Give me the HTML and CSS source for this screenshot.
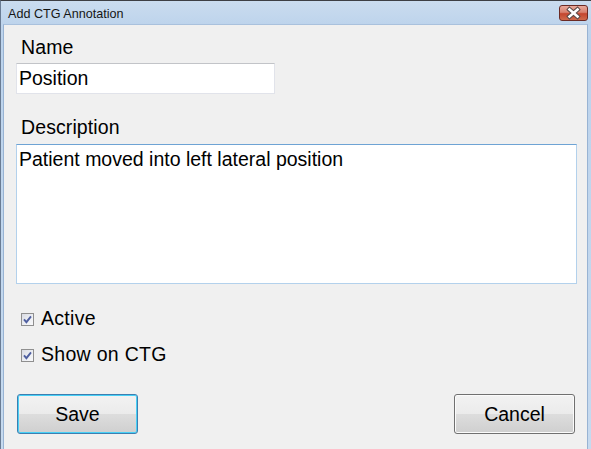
FILE: index.html
```html
<!DOCTYPE html>
<html>
<head>
<meta charset="utf-8">
<title>Add CTG Annotation</title>
<link rel="stylesheet" href="styles.css">
</head>
<body>
<div class="window">
  <div class="titlebar">
    <span class="title">Add CTG Annotation</span>
    <div class="close-btn">
      <svg width="29" height="16" viewBox="0 0 29 16">
        <path d="M10.5 4.5 L18.5 11.5 M18.5 4.5 L10.5 11.5" stroke="#5a4a48" stroke-width="4.6" stroke-linecap="square" fill="none"/>
        <path d="M10.5 4.5 L18.5 11.5 M18.5 4.5 L10.5 11.5" stroke="#ffffff" stroke-width="2.6" stroke-linecap="square" fill="none"/>
      </svg>
    </div>
  </div>
  <div class="client">
    <label class="field-label">Name</label>
    <input class="textbox" type="text" value="Position">
    <label class="field-label desc-label">Description</label>
    <textarea class="textarea">Patient moved into left lateral position</textarea>
    <div class="check-row first">
      <span class="checkbox">
        <svg width="11" height="11" viewBox="0 0 11 11"><path d="M2 5.4 L4.4 8.2 L9 2.4" stroke="#4f5fa0" stroke-width="1.9" fill="none"/></svg>
      </span>
      <span class="check-text">Active</span>
    </div>
    <div class="check-row">
      <span class="checkbox">
        <svg width="11" height="11" viewBox="0 0 11 11"><path d="M2 5.4 L4.4 8.2 L9 2.4" stroke="#4f5fa0" stroke-width="1.9" fill="none"/></svg>
      </span>
      <span class="check-text">Show on CTG</span>
    </div>
    <div class="buttons">
      <button class="btn btn-default">Save</button>
      <button class="btn">Cancel</button>
    </div>
  </div>
</div>
</body>
</html>
```
FILE: styles.css
```css
html, body {
  margin: 0;
  padding: 0;
  background: #f0f0f0;
}
.window {
  width: 591px;
  height: 449px;
  box-sizing: border-box;
  border-top: 1px solid #3d3f44;
  border-left: 1px solid #6a7c94;
  background: linear-gradient(to bottom, #c3d7ee 0px, #bcd3ec 40px, #c6daef 100%);
  display: flex;
  flex-direction: column;
  overflow: hidden;
  font-family: "Liberation Sans", Arial, sans-serif;
  color: #000;
}
.titlebar {
  height: 23px;
  flex: none;
  display: flex;
  align-items: flex-start;
  justify-content: space-between;
  background: linear-gradient(to bottom, #cadcef 0%, #bed4ec 100%);
}
.title {
  font-size: 12.6px;
  line-height: 14px;
  margin-top: 6px;
  margin-left: 7px;
  color: #151515;
}
.close-btn {
  width: 29px;
  height: 16px;
  margin-top: 4px;
  margin-right: 3px;
  box-sizing: border-box;
  border: 1px solid #6b2a24;
  border-radius: 3px;
  background: linear-gradient(to bottom, #e9a99b 0%, #d8816f 45%, #c4462f 55%, #cf6a4c 100%);
  display: flex;
  align-items: center;
  justify-content: center;
  overflow: hidden;
}
.close-btn svg {
  flex: none;
  margin-left: -1px;
  margin-top: -1px;
}
.client {
  flex: 1;
  margin-left: 2px;
  margin-right: 3px;
  border-left: 1px solid #98b3d3;
  border-right: 1px solid #98b3d3;
  border-top: 1px solid #a9c1dd;
  background: #f0f0f0;
  padding: 11px 10px 0 12px;
  display: flex;
  flex-direction: column;
  align-items: flex-start;
}
.field-label {
  font-size: 19.5px;
  line-height: 22px;
  margin-left: 5px;
  letter-spacing: 0.1px;
}
.desc-label {
  margin-top: 22px;
}
.textbox {
  margin-top: 5px;
  width: 259px;
  height: 31px;
  box-sizing: border-box;
  border: 1px solid #e1e3ea;
  border-top-color: #c2c4c8;
  padding: 3px 2px 4px 2px;
  font-family: "Liberation Sans", Arial, sans-serif;
  font-size: 19.5px;
  line-height: 22px;
  background: #fff;
  color: #000;
  outline: none;
}
.textarea {
  margin-top: 6px;
  width: 561px;
  height: 140px;
  box-sizing: border-box;
  border: 1px solid #b3d1ec;
  border-top-color: #6ea3d4;
  padding: 3px 2px;
  font-family: "Liberation Sans", Arial, sans-serif;
  font-size: 19.5px;
  line-height: 22px;
  background: #fff;
  color: #000;
  resize: none;
  overflow: hidden;
  outline: none;
}
.check-row {
  display: flex;
  align-items: flex-start;
  height: 22px;
  margin-top: 14px;
  margin-left: 5px;
}
.check-row.first {
  margin-top: 23px;
}
.checkbox {
  width: 13px;
  height: 13px;
  margin-top: 6px;
  box-sizing: border-box;
  border: 1px solid #8f8f8f;
  background: linear-gradient(135deg, #d9dbe3 0%, #eef0f4 60%, #f8f8fa 100%);
  display: flex;
  align-items: center;
  justify-content: center;
  flex: none;
}
.check-text {
  margin-left: 7px;
  font-size: 19.5px;
  line-height: 22px;
  letter-spacing: 0.3px;
}
.buttons {
  align-self: stretch;
  display: flex;
  justify-content: space-between;
  margin-top: 29px;
  padding: 0 2px 0 1px;
}
.btn {
  width: 121px;
  height: 40px;
  box-sizing: border-box;
  border: 1px solid #707070;
  border-radius: 3px;
  background: linear-gradient(to bottom, #f2f2f2 0%, #ebebeb 50%, #dddddd 51%, #cfcfcf 100%);
  box-shadow: inset 0 0 0 1px #fbfbfb;
  font-family: "Liberation Sans", Arial, sans-serif;
  font-size: 19.5px;
  color: #000;
  padding: 0;
}
.btn-default {
  border-color: #3c7fb1;
  box-shadow: inset 0 0 0 1px #48d0f6;
}
```
